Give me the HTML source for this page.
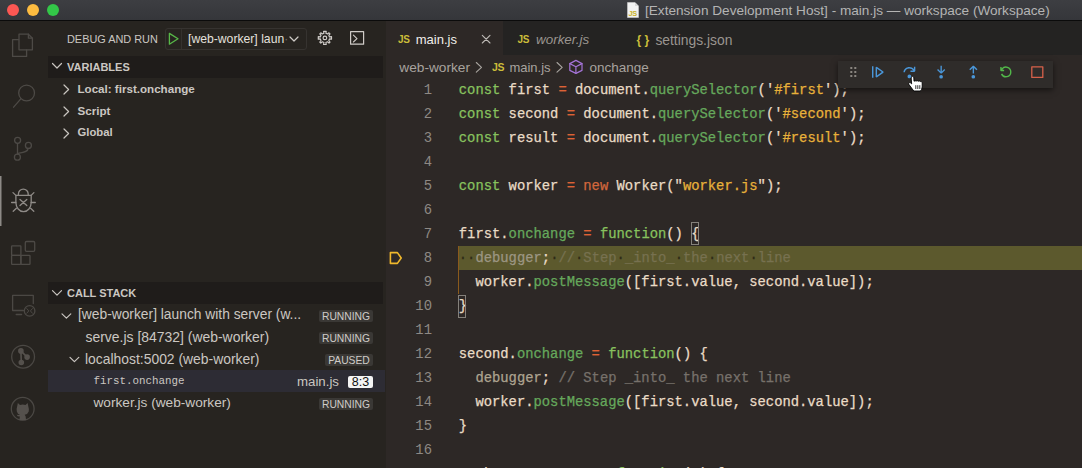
<!DOCTYPE html>
<html><head><meta charset="utf-8">
<style>
*{box-sizing:border-box;margin:0;padding:0}
html,body{width:1082px;height:468px;overflow:hidden;background:#2d2826;font-family:"Liberation Sans",sans-serif;position:relative}
.abs{position:absolute}
#title{left:0;top:0;width:1082px;height:21px;background:linear-gradient(#3d3e42,#35363a);border-bottom:1.5px solid #0b0b0b}
.tl{position:absolute;top:4px;width:12px;height:12px;border-radius:50%}
#ttext{left:645px;top:3px;font-size:13.6px;color:#b4b4b4;white-space:nowrap;line-height:16px}
#activity{left:0;top:21px;width:48px;height:447px;background:#272420}
#sidebar{left:48px;top:21px;width:338px;height:447px;background:#272420}
#tabs{left:386px;top:21px;width:696px;height:34px;background:#242322}
.t{position:absolute;white-space:nowrap}
.sec{position:absolute;left:48px;width:335px;height:22px;background:#1f1c1a}
.code{position:absolute;left:458.8px;font-family:"Liberation Mono",monospace;font-size:13.84px;line-height:24px;white-space:pre;color:#eadcc6;-webkit-text-stroke:0.25px currentColor}
.ln{position:absolute;left:392px;font-family:"Liberation Mono",monospace;font-size:13.87px;line-height:24px;color:#8e8984;text-align:right;width:40px}
.k{color:#88c25e}.o{color:#dc6236}.m{color:#66a85c}.s{color:#e8b13a}.n{color:#d2673c}.c{color:#77716b}.d{color:#aea490}
.sb{color:#cbc7c2}
.w{color:#2e2b17}
.badge{position:absolute;height:12px;background:#3a3835;color:#d0ccc8;font-size:10.3px;line-height:14px;text-align:center;border-radius:2px;overflow:hidden}
</style></head><body>
<div id="title" class="abs">
  <div class="tl" style="left:7px;background:#fc5753"></div>
  <div class="tl" style="left:27px;background:#fdbc40"></div>
  <div class="tl" style="left:47px;background:#33c748"></div>
  <svg class="abs" style="left:627px;top:2px" width="12" height="16" viewBox="0 0 12 16"><path d="M0.5 0.5 H8 L11.5 4 V15.5 H0.5 Z" fill="#f2f2f2" stroke="#cfcfcf" stroke-width="0.6"/><path d="M8 0.5 V4 H11.5" fill="#d8d8d8"/><text x="1.6" y="13.6" font-size="7.4" font-family="Liberation Sans" font-weight="bold" fill="#c9b22a" letter-spacing="-0.4">JS</text></svg>
  <div id="ttext" class="abs">[Extension Development Host] - main.js — workspace (Workspace)</div>
</div>
<div id="activity" class="abs"></div>
<div id="sidebar" class="abs"></div>
<!-- sidebar content -->
<div class="t sb" style="left:67px;top:33px;font-size:10.9px;line-height:13px">DEBUG AND RUN</div>
<div class="abs" style="left:165px;top:28px;width:142px;height:22px;border:1px solid #363330;border-radius:3px"></div>
<div class="t" style="left:188px;top:32px;font-size:12.2px;line-height:14px;color:#e4e1dd">[web-worker] laun<span style="opacity:0.35">·</span></div>
<div class="sec" style="top:56px"></div>
<div class="t sb" style="left:67px;top:61px;font-size:11px;font-weight:bold;line-height:13px">VARIABLES</div>
<div class="t sb" style="left:77.5px;top:82px;font-size:11.6px;font-weight:bold;line-height:13px">Local: first.onchange</div>
<div class="t sb" style="left:77.5px;top:104px;font-size:11.6px;font-weight:bold;line-height:13px">Script</div>
<div class="t sb" style="left:77.5px;top:126px;font-size:11.3px;font-weight:bold;line-height:13px">Global</div>
<div class="sec" style="top:282px"></div>
<div class="t sb" style="left:67px;top:287px;font-size:11px;font-weight:bold;line-height:13px">CALL STACK</div>
<div class="t sb" style="left:78px;top:307px;font-size:13.8px;line-height:16px">[web-worker] launch with server (w...</div>
<div class="badge" style="left:319px;top:310px;width:54px">RUNNING</div>
<div class="t sb" style="left:85.5px;top:329px;font-size:13.95px;line-height:16px">serve.js [84732] (web-worker)</div>
<div class="badge" style="left:319px;top:332px;width:54px">RUNNING</div>
<div class="t sb" style="left:85px;top:351px;font-size:13.9px;line-height:16px">localhost:5002 (web-worker)</div>
<div class="badge" style="left:325px;top:354px;width:48px">PAUSED</div>
<div class="abs" style="left:48px;top:370px;width:337px;height:22px;background:#2d2c34"></div>
<div class="t sb" style="left:93.5px;top:373px;font-family:'Liberation Mono',monospace;font-size:10.83px;line-height:16px">first.onchange</div>
<div class="t sb" style="left:297px;top:374px;font-size:13.26px;line-height:16px">main.js</div>
<div class="badge" style="left:348px;top:376px;width:25px;background:#f4f4f4;color:#111;font-size:12.5px;line-height:13px">8:3</div>
<div class="t sb" style="left:93.5px;top:395px;font-size:13.67px;line-height:16px">worker.js (web-worker)</div>
<div class="badge" style="left:319px;top:398px;width:54px">RUNNING</div>
<!-- editor -->
<div id="tabs" class="abs"></div>
<div class="abs" style="left:386px;top:21px;width:117px;height:34px;background:#2d2826"></div>
<div class="t" style="left:415.7px;top:32px;font-size:13.04px;line-height:16px;color:#f0eeea">main.js</div>
<div class="t" style="left:536px;top:32px;font-size:13.43px;line-height:16px;color:#9a9590;font-style:italic">worker.js</div>
<div class="t" style="left:655.4px;top:32px;font-size:13.85px;line-height:16px;color:#9a9590">settings.json</div>
<div class="t" style="left:399.3px;top:60px;font-size:13.7px;line-height:16px;color:#a8a39e">web-worker</div>
<div class="t" style="left:509.4px;top:60px;font-size:13px;line-height:16px;color:#a8a39e">main.js</div>
<div class="t" style="left:589.5px;top:60px;font-size:13.5px;line-height:16px;color:#a8a39e">onchange</div>
<div class="abs" style="left:458px;top:246px;width:624px;height:24px;background:#5c592d"></div>
<div class="ln" style="top:78px">1</div>
<div class="code" style="top:78px"><span class="k">const</span> first <span class="o">=</span> document.<span class="m">querySelector</span>(&#x27;<span class="s">#first</span>&#x27;);</div>
<div class="ln" style="top:102px">2</div>
<div class="code" style="top:102px"><span class="k">const</span> second <span class="o">=</span> document.<span class="m">querySelector</span>(&#x27;<span class="s">#second</span>&#x27;);</div>
<div class="ln" style="top:126px">3</div>
<div class="code" style="top:126px"><span class="k">const</span> result <span class="o">=</span> document.<span class="m">querySelector</span>(&#x27;<span class="s">#result</span>&#x27;);</div>
<div class="ln" style="top:150px">4</div>
<div class="ln" style="top:174px">5</div>
<div class="code" style="top:174px"><span class="k">const</span> worker <span class="o">=</span> <span class="n">new</span> Worker(&quot;<span class="s">worker.js</span>&quot;);</div>
<div class="ln" style="top:198px">6</div>
<div class="ln" style="top:222px">7</div>
<div class="code" style="top:222px">first.<span class="m">onchange</span> <span class="o">=</span> <span class="k">function</span>() {</div>
<div class="ln" style="top:246px">8</div>
<div class="ln" style="top:270px">9</div>
<div class="code" style="top:270px">  worker.<span class="m">postMessage</span>([first.value, second.value]);</div>
<div class="ln" style="top:294px">10</div>
<div class="code" style="top:294px">}</div>
<div class="ln" style="top:318px">11</div>
<div class="ln" style="top:342px">12</div>
<div class="code" style="top:342px">second.<span class="m">onchange</span> <span class="o">=</span> <span class="k">function</span>() {</div>
<div class="ln" style="top:366px">13</div>
<div class="code" style="top:366px"><span class="d">  debugger</span>;<span class="c"> // Step _into_ the next line</span></div>
<div class="ln" style="top:390px">14</div>
<div class="code" style="top:390px">  worker.<span class="m">postMessage</span>([first.value, second.value]);</div>
<div class="ln" style="top:414px">15</div>
<div class="code" style="top:414px">}</div>
<div class="ln" style="top:438px">16</div>
<div class="ln" style="top:462px">17</div>
<div class="code" style="top:462px">worker.<span class="m">onmessage</span> <span class="o">=</span> <span class="k">function</span>(e) {</div>
<!--ICONS--><svg class="abs" style="left:0;top:0" width="1082" height="468" viewBox="0 0 1082 468" fill="none" stroke-linecap="round" stroke-linejoin="round">
 <!-- activity bar -->
 <g stroke="#4d4a46" stroke-width="1.3">
  <path d="M19 34.2 H28.4 L32.4 38.2 V49.8 H19 Z"/>
  <path d="M28.4 34.2 V38.2 H32.4"/>
  <path d="M18.6 39.6 H12.6 V56.4 H26.6 V50"/>
  <circle cx="26.6" cy="93" r="7.9"/>
  <path d="M20.8 98.8 L13.6 107.2"/>
  <circle cx="17.6" cy="140.3" r="3"/>
  <circle cx="28.4" cy="145.4" r="3"/>
  <circle cx="17.4" cy="157.2" r="3"/>
  <path d="M17.5 143.3 V154.2"/>
  <path d="M28.2 148.4 C28 152 23 152.5 17.6 153.5"/>
  <rect x="11.6" y="245.8" width="9.3" height="9.5" rx="0.6"/>
  <rect x="11.6" y="255.3" width="9.3" height="9" rx="0.6"/>
  <rect x="20.9" y="255.3" width="9.1" height="9" rx="0.6"/>
  <rect x="25.3" y="241.5" width="9.4" height="9.8" rx="1.2"/>
 </g>
 <g stroke="#4b4844" stroke-width="1.3">
  <path d="M23.4 310.5 H12.6 V295.3 H33.3 V303.6"/>
  <path d="M16.2 314.5 H21.6"/>
  <circle cx="29.6" cy="310.9" r="5.3"/>
  <path d="M26.8 308.6 L28.8 310.9 L26.8 313.2 M32.4 308.6 L30.4 310.9 L32.4 313.2" stroke-width="1"/>
  <circle cx="23.1" cy="356.7" r="11.4"/>
  <circle cx="22.7" cy="408.8" r="11.4"/>
 </g>
 <g fill="#55514d" stroke="#55514d" stroke-width="1.6">
  <circle cx="20.9" cy="350.9" r="2"/>
  <circle cx="27.1" cy="357.1" r="2"/>
  <circle cx="21.3" cy="362.5" r="2"/>
  <path d="M20.9 350.9 L21.3 362.5 M20.9 350.9 L27.1 357.1" fill="none"/>
 </g>
 <path fill="#55514d" transform="translate(22.7 411) scale(0.85) translate(-22.7 -409)" d="M17 399.5 L19.5 402 Q22.7 401 26 402 L28.5 399.5 L29.5 404.5 Q30.5 407 29.8 409.5 Q28.5 413 25 413.5 Q26.5 415 26.5 418 V420 H19 V418 Q19 416.5 19.5 415.5 Q16.5 416 15.5 413 Q18 414 19.5 413.5 Q16.5 412.5 15.8 409.5 Q15 407 16 404.5 Z"/>
 <!-- bug (active) -->
 <rect x="0" y="176" width="1.5" height="50" fill="#8d8a86"/>
 <g stroke="#8f8b87" stroke-width="1.3">
  <path d="M18.4 195.2 V194 A4.9 4.9 0 0 1 28.2 194 V195.2"/>
  <path d="M15.9 195.4 H31.2 V202.5 A7.65 9.2 0 0 1 15.9 202.5 Z"/>
  <path d="M13 192.6 L15.9 195.4 M11.6 202.5 H15.9 M13.2 211.2 L16.4 208.2"/>
  <path d="M33.9 192.6 L31.1 195.4 M35.3 202.5 H31.1 M33.8 211.2 L30.6 208.2"/>
  <path d="M20 199.4 L26.8 205.6 M26.8 199.4 L20 205.6"/>
 </g>
 <!-- sidebar header icons -->
 <path d="M169.4 33.4 V44.2 L178 38.8 Z" stroke="#58b848" stroke-width="1.3"/>
 <path d="M181.5 29.5 V49" stroke="#34312e" stroke-width="1"/>
 <path d="M290 37 L294 41 L298 37" stroke="#cfcbc7" stroke-width="1.2"/>
 <g stroke="#cfcbc7" stroke-width="1.2" transform="translate(324.9 37.9)">
  <path d="M-1.3 -6.6 L-1 -4.6 L-2.6 -3.9 L-4.1 -5.1 L-5.1 -4.1 L-3.9 -2.6 L-4.6 -1 L-6.6 -1.3 V1.3 L-4.6 1 L-3.9 2.6 L-5.1 4.1 L-4.1 5.1 L-2.6 3.9 L-1 4.6 L-1.3 6.6 H1.3 L1 4.6 L2.6 3.9 L4.1 5.1 L5.1 4.1 L3.9 2.6 L4.6 1 L6.6 1.3 V-1.3 L4.6 -1 L3.9 -2.6 L5.1 -4.1 L4.1 -5.1 L2.6 -3.9 L1 -4.6 L1.3 -6.6 Z"/>
  <circle cx="0" cy="0" r="1.8"/>
 </g>
 <rect x="350.6" y="31.6" width="13" height="12.6" stroke="#cfcbc7" stroke-width="1.2"/>
 <path d="M353.4 35.2 L357 38.6 L353.4 42" stroke="#cfcbc7" stroke-width="1.1"/>
 <!-- section chevrons -->
 <g stroke="#c9c5c0" stroke-width="1.2">
  <path d="M52.5 63.5 L57 68 L61.5 63.5"/>
  <path d="M52.5 290.6 L57 295.1 L61.5 290.6"/>
  <path d="M64 85 L68.6 89.5 L64 94"/>
  <path d="M64 107 L68.6 111.5 L64 116"/>
  <path d="M64 129 L68.6 133.5 L64 138"/>
  <path d="M62 313.8 L66.4 318.2 L70.8 313.8"/>
  <path d="M70 357.3 L74.4 361.7 L78.8 357.3"/>
 </g>
 <!-- tabs -->
 <text x="398" y="43.2" font-family="Liberation Sans" font-weight="bold" font-size="10" fill="#cbbd3a" stroke="none" letter-spacing="-0.3">JS</text>
 <text x="517.6" y="43.2" font-family="Liberation Sans" font-weight="bold" font-size="10" fill="#cbbd3a" stroke="none" letter-spacing="-0.3">JS</text>
 <text x="636.4" y="44" font-family="Liberation Sans" font-weight="bold" font-size="12" fill="#cbbd3a" stroke="none">{ }</text>
 <path d="M482.3 35.3 L490 43 M490 35.3 L482.3 43" stroke="#bdb9b5" stroke-width="1.1"/>
 <!-- breadcrumbs -->
 <path d="M476.3 62.5 L481.5 67.3 L476.3 72.1 M557 62.5 L562.2 67.3 L557 72.1" stroke="#a9a5a0" stroke-width="1.1"/>
 <text x="492" y="71.2" font-family="Liberation Sans" font-weight="bold" font-size="10.5" fill="#cbbd3a" stroke="none" letter-spacing="-0.3">JS</text>
 <g stroke="#a373d6" stroke-width="1.2">
  <path d="M575.9 60.4 L582 63.6 V70.4 L575.9 73.4 L569.8 70.4 V63.6 Z"/>
  <path d="M569.8 63.6 L575.9 66.8 L582 63.6 M575.9 66.8 V73.4"/>
 </g>
 <!-- current line arrow -->
 <path d="M390.4 252.6 H397.4 L401.2 258 L397.4 263.4 H390.4 Z" stroke="#f0b82c" stroke-width="1.6"/>
</svg>
<!--/ICONS-->
<!--EXTRA-->
<div class="abs" style="left:458px;top:246px;width:1.3px;height:48px;background:#8a5a1c"></div>
<div class="code" style="top:246px"><span class="w">·</span><span class="w">·</span><span style="color:#9c9683">debugger</span><span style="color:#eadcc6">;</span><span class="w">·</span><span style="color:#777150">//</span><span class="w">·</span><span style="color:#777150">Step</span><span class="w">·</span><span style="color:#777150">_into_</span><span class="w">·</span><span style="color:#777150">the</span><span class="w">·</span><span style="color:#777150">next</span><span class="w">·</span><span style="color:#777150">line</span></div>
<div class="abs" style="left:691px;top:222px;width:8px;height:23px;border:1px solid #85817b"></div>
<div class="abs" style="left:458px;top:295px;width:8px;height:23px;border:1px solid #85817b"></div>
<!-- debug toolbar -->
<div class="abs" style="left:838px;top:61px;width:215px;height:27px;background:#2f2c2a;box-shadow:0 2px 6px rgba(0,0,0,0.55)"></div>
<svg class="abs" style="left:0;top:0" width="1082" height="468" viewBox="0 0 1082 468" fill="none" stroke-linecap="round" stroke-linejoin="round">
 <g fill="#8a8680">
  <rect x="850.3" y="67" width="2" height="2"/><rect x="854.3" y="67" width="2" height="2"/>
  <rect x="850.3" y="71" width="2" height="2"/><rect x="854.3" y="71" width="2" height="2"/>
  <rect x="850.3" y="75" width="2" height="2"/><rect x="854.3" y="75" width="2" height="2"/>
 </g>
 <g fill="#4a96d8" fill-rule="evenodd">
  <path transform="translate(869.6 64.4) scale(0.96)" d="M2.5 2H4v12H2.5V2zm4.936.39L6.25 3v10l1.186.61 7-5V7.39l-7-5zM7.75 11.543V4.457L12.71 8l-4.96 3.543z"/>
  <path transform="translate(901.8 65) scale(0.95)" d="M14.25 5.75v-4h-1.5v2.542c-1.145-1.359-2.911-2.209-4.84-2.209-3.177 0-5.92 2.307-6.16 5.398l-.02.269h1.501l.022-.226c.212-2.195 2.202-3.94 4.656-3.94 1.736 0 3.244.875 4.05 2.166h-2.83v1.5h4.163l.962-.975V5.75h-.004zM8 14a2 2 0 1 0 0-4 2 2 0 0 0 0 4z"/>
  <path transform="translate(933.8 64.8) scale(0.92)" d="M8 9.532h.542l3.905-3.905-1.061-1.06-2.637 2.61V1H7.251v6.177l-2.637-2.62-1.061 1.06 3.905 3.915H8zm1.956 3.481a2 2 0 1 1-4 0 2 2 0 0 1 4 0z"/>
  <path transform="translate(966 64.8) scale(0.92)" d="M8 1h-.542L3.553 4.905l1.061 1.06 2.637-2.61v6.177h1.498V3.355l2.637 2.61 1.061-1.06L8.542 1H8zm1.956 12.013a2 2 0 1 1-4 0 2 2 0 0 1 4 0z"/>
 </g>
 <path transform="translate(998.4 64.6) scale(0.917)" fill="#52b84a" d="M12.75 8a4.5 4.5 0 0 1-8.61 1.834l-1.391.565A6.001 6.001 0 0 0 14.25 8 6 6 0 0 0 3.5 4.334V2.5H2v4l.75.75h3.5v-1.5H4.352A4.5 4.5 0 0 1 12.75 8z"/>
 <rect x="1031.8" y="66.8" width="11" height="10.6" stroke="#d6604a" stroke-width="1.3"/>
 <!-- cursor -->
 <path d="M911.3 77.2 Q912.5 75.4 913.8 77.2 L914 81.2 Q915 80.4 916.2 81 Q917.4 80.4 918.4 81.2 Q919.6 80.6 920.6 81.6 Q921.8 81.4 922.2 82.6 L922.2 87 Q921.8 90 920.4 91 L913.8 91 L909 84.6 Q908.2 83.2 909.4 82.6 Q910.4 82.4 911.4 83.6 Z" fill="#ffffff" stroke="#000000" stroke-width="0.9"/>
 <path d="M915.8 85.2 V89 M917.8 85.2 V89 M919.8 85.2 V89" stroke="#000" stroke-width="0.8" stroke-linecap="butt"/>
</svg>
<!--/EXTRA-->
</body></html>
